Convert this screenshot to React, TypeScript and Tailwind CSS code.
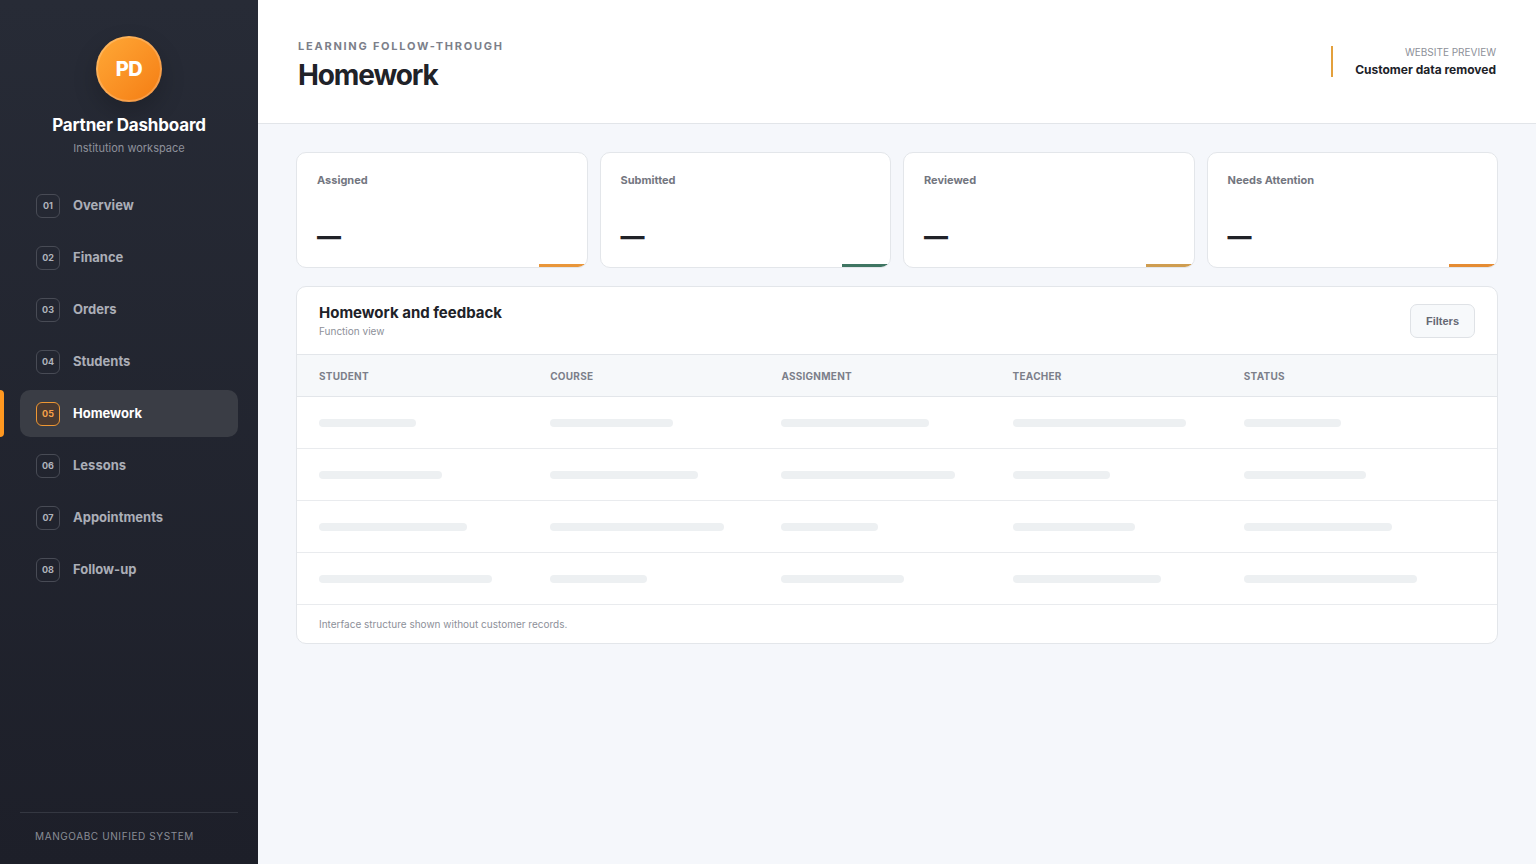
import React from 'react';

const navItems = ['Overview', 'Finance', 'Orders', 'Students', 'Homework', 'Lessons', 'Appointments', 'Follow-up'];

const stats = [
  { label: 'Assigned', accent: 'bg-[#e9963a]' },
  { label: 'Submitted', accent: 'bg-[#3f7562]' },
  { label: 'Reviewed', accent: 'bg-[#cf9d50]' },
  { label: 'Needs Attention', accent: 'bg-[#e58c33]' },
];

const columns = ['Student', 'Course', 'Assignment', 'Teacher', 'Status'];
const rows = [0, 1, 2, 3];
const barWidths = ['w-[42%]', 'w-[53%]', 'w-[64%]', 'w-[75%]'];

const Sidebar: React.FC<{ active: string }> = ({ active }) => {
  return (
    <aside className="w-[258px] shrink-0 flex flex-col px-5 pt-9 pb-5 bg-linear-to-b from-[#272b36] to-[#1d1f29]">
      <div className="flex flex-col items-center mb-[26px]">
        <div className="w-[66px] h-[66px] rounded-full border-2 border-white/20 bg-linear-to-br from-[#ffa936] to-[#f47c10] bg-origin-border shadow-[0_10px_24px_rgba(0,0,0,0.2)] flex items-center justify-center text-xl font-extrabold text-white tracking-tight">
          PD
        </div>
        <h2 className="mt-3 text-[17px] leading-[22px] font-bold text-white tracking-[-0.01em]">Partner Dashboard</h2>
        <p className="mt-1 text-[11px] leading-4 text-[#8e919b]">Institution workspace</p>
      </div>

      <nav className="flex flex-col gap-[5px]">
        {navItems.map((item, i) => {
          const isActive = item === active;
          return (
            <a
              key={item}
              href="#"
              aria-current={isActive ? 'page' : undefined}
              className={`relative h-[47px] px-4 flex items-center gap-[13px] rounded-[10px] text-[13px] font-bold ${isActive ? 'bg-[#3a3d45] text-white' : 'text-[#abaeb7]'}`}
            >
              {isActive && <span className="absolute -left-5 inset-y-0 w-1 rounded-r bg-[#ff9820]" />}
              <span
                className={`w-6 h-6 rounded-md border flex items-center justify-center text-[9px] font-bold ${isActive ? 'border-[#ee9733] bg-[#4a3a31] text-[#f5a04a]' : 'border-[#484b55] text-[#b0b3bb]'}`}
              >
                0{i + 1}
              </span>
              <span className="leading-[21px]">{item}</span>
            </a>
          );
        })}
      </nav>

      <div className="mt-auto border-t border-[#343741] px-[15px] pt-4 text-[10px] leading-[15px] tracking-[0.06em] uppercase text-[#8a8d96]">
        Mangoabc unified system
      </div>
    </aside>
  );
};

const App: React.FC = () => {
  return (
    <div className="min-h-screen flex bg-[#f5f7fb] font-['Inter',sans-serif] text-[#202228]">
      <Sidebar active="Homework" />

      <main className="flex-1 min-w-0">
        <header className="px-10 pt-[38px] pb-[31px] flex items-start justify-between bg-white border-b border-[#e2e5e9]">
          <div>
            <p className="text-[11px] leading-4 font-bold tracking-[0.16em] uppercase text-[#7c7f8a]">Learning follow-through</p>
            <h1 className="mt-1 text-[28px] leading-[34px] font-bold tracking-[-0.04em]">Homework</h1>
          </div>
          <div className="mt-2 border-l-2 border-[#e3a03c] pl-[22px] text-right">
            <p className="text-[10px] leading-[13px] uppercase text-[#8d9099]">Website preview</p>
            <p className="mt-[3px] text-xs leading-[15px] font-bold">Customer data removed</p>
          </div>
        </header>

        <div className="px-[38px] py-7">
          {/* Stats */}
          <section className="grid grid-cols-4 gap-3">
            {stats.map((stat) => (
              <div key={stat.label} className="relative overflow-hidden h-[116px] px-5 pt-[19px] pb-[18px] flex flex-col justify-between bg-white border border-[#e3e6ea] rounded-[10px]">
                <p className="text-[11px] leading-4 font-bold text-[#73767f]">{stat.label}</p>
                <p className="text-2xl leading-6 font-extrabold">—</p>
                <span className={`absolute right-0 bottom-0 w-12 h-[3px] ${stat.accent}`} />
              </div>
            ))}
          </section>

          {/* Table panel */}
          <section className="mt-[18px] bg-white border border-[#e3e6ea] rounded-[10px] overflow-hidden">
            <div className="px-[22px] pt-[17px] pb-4 flex items-center justify-between border-b border-[#e3e6ea]">
              <div>
                <h2 className="text-[15px] leading-[18px] font-bold">Homework and feedback</h2>
                <p className="mt-[2px] text-[10px] leading-[14px] text-[#8d9099]">Function view</p>
              </div>
              <button type="button" className="h-[34px] px-[15px] rounded-[7px] border border-[#dfe2e6] bg-[#f7f9fb] font-['Liberation_Sans',sans-serif] text-[11px] font-bold text-[#656873]">
                Filters
              </button>
            </div>

            <table className="block">
              <thead className="block">
                <tr className="grid grid-cols-5 items-center h-[42px] px-[22px] bg-[#f6f8fa] border-b border-[#e3e6ea]">
                  {columns.map((col) => (
                    <th key={col} scope="col" className="text-left text-[10px] leading-4 font-bold tracking-wide uppercase text-[#7c7f8a]">
                      {col}
                    </th>
                  ))}
                </tr>
              </thead>
              <tbody className="block">
                {rows.map((row) => (
                  <tr key={row} className="grid grid-cols-5 items-center h-[52px] px-[22px] border-b border-[#e9ebee]">
                    {columns.map((col, i) => (
                      <td key={col}>
                        <div className={`h-2 rounded-full bg-[#edf0f2] ${barWidths[(row + i) % 4]}`} />
                      </td>
                    ))}
                  </tr>
                ))}
              </tbody>
            </table>

            <p className="px-[22px] py-[11px] text-[10px] leading-4 text-[#8d9099]">Interface structure shown without customer records.</p>
          </section>
        </div>
      </main>
    </div>
  );
};

export default App;
